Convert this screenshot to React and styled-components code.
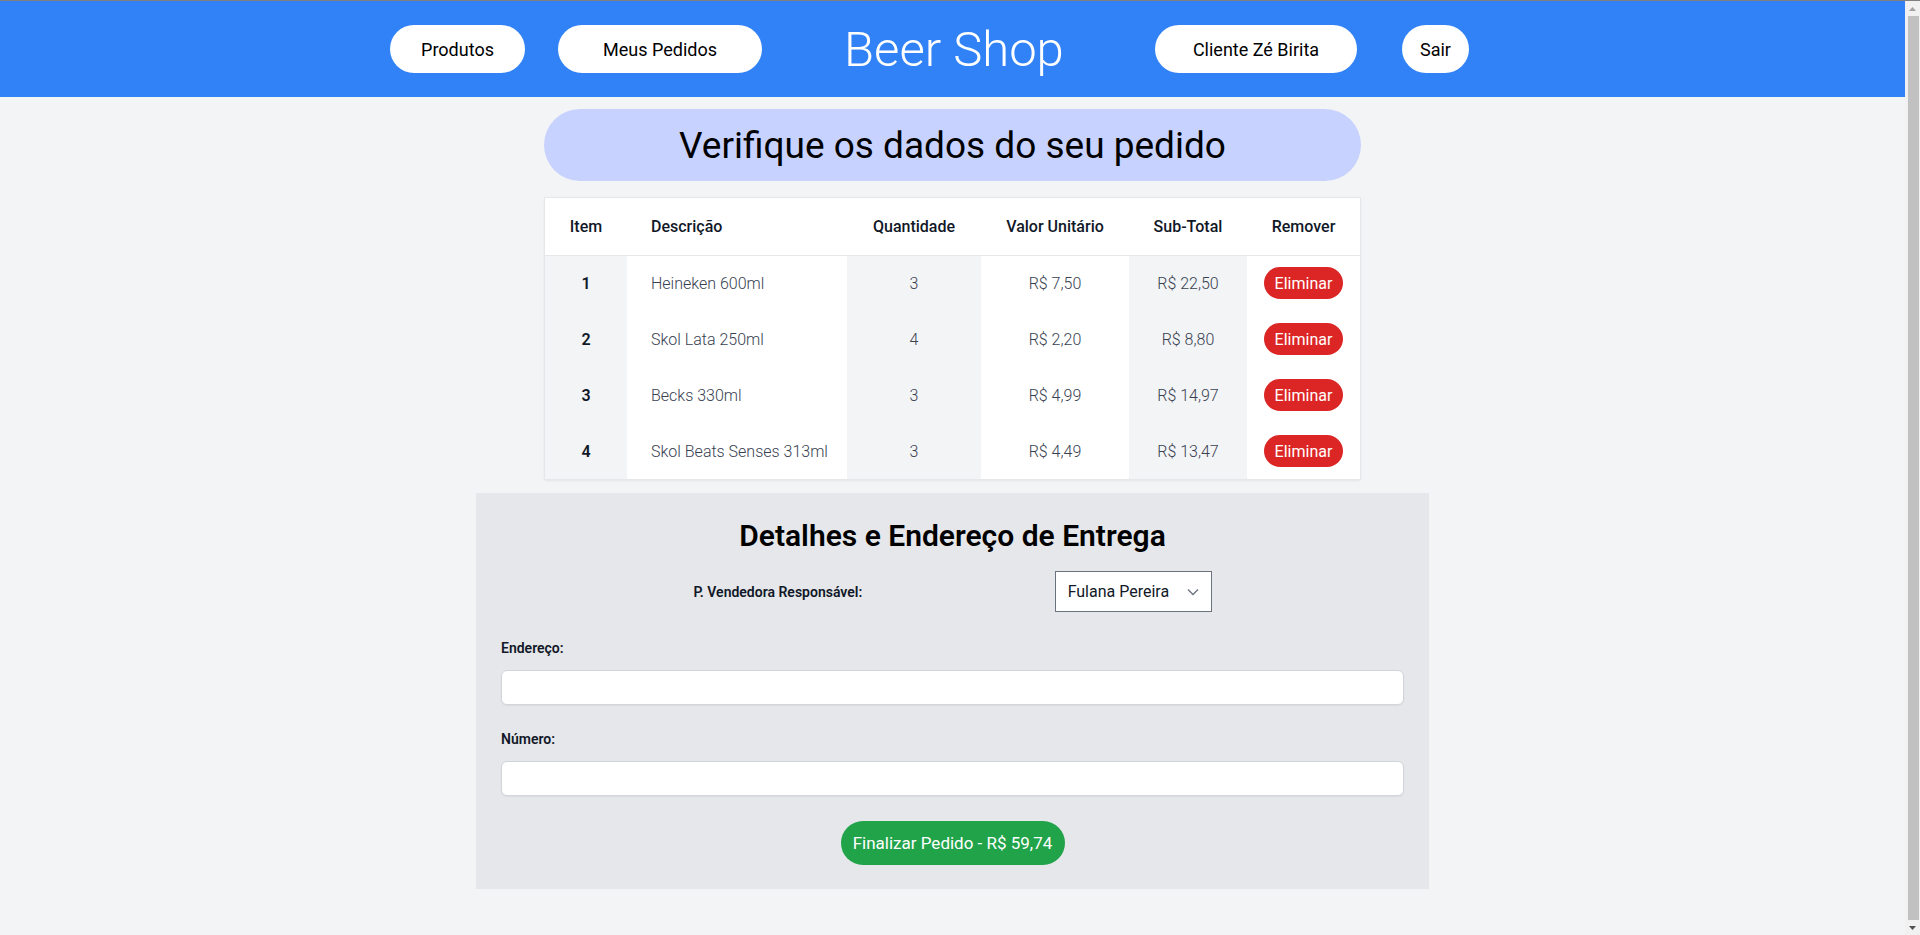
import React from 'react';
import styled, { createGlobalStyle } from 'styled-components';

const GlobalStyle = createGlobalStyle`
  * { box-sizing: border-box; }
  body {
    margin: 0;
    border-top: 1px solid #808080;
    background-color: #f3f4f6;
    font-family: Roboto, "Open Sans", sans-serif;
    color: #111827;
  }
`;

const Page = styled.div`
  min-height: 949px;
  margin-right: 15px;
  display: flex;
  flex-direction: column;
`;

// the classic browser scrollbar seen at the right edge of the screenshot
const ScrollTrack = styled.div`
  position: fixed;
  top: 1px;
  right: 0;
  bottom: 0;
  width: 15px;
  background-color: #f1f1f1;
  display: flex;
  flex-direction: column;
  align-items: center;
`;

const ScrollArrow = styled.div`
  height: 15px;
  display: flex;
  align-items: center;
  justify-content: center;
`;

const ScrollThumb = styled.div`
  flex: 1;
  width: 11px;
  margin: 0 0 0 1px;
  background-color: #c1c1c1;
`;

const Header = styled.header`
  height: 96px;
  background-color: #3182f6;
  display: flex;
  align-items: center;
  justify-content: center;
  padding-right: 46px;
`;

const NavButton = styled.button`
  width: ${props => props.$w}px;
  height: 48px;
  margin-left: ${props => props.$ml || 0}px;
  border: none;
  border-radius: 24px;
  background-color: #fff;
  color: #000;
  font-family: inherit;
  font-size: 18px;
  cursor: pointer;
`;

const Logo = styled.h1`
  width: 217px;
  margin: 0 0 0 82px;
  text-align: center;
  color: #fff;
  font-size: 49px;
  font-weight: 300;
  line-height: 1;
  white-space: nowrap;
`;

const Main = styled.main`
  display: flex;
  flex-direction: column;
  align-items: center;
`;

const TitleBox = styled.h2`
  width: 817px;
  height: 72px;
  margin: 12px 0 0;
  border-radius: 36px;
  background-color: #c7d2fe;
  display: flex;
  align-items: center;
  justify-content: center;
  font-size: 37px;
  font-weight: 400;
  color: #000;
`;

const Table = styled.table`
  width: 815px;
  margin-top: 17px;
  border-collapse: collapse;
  background-color: #fff;
  box-shadow: 0 0 0 1px #e5e7eb, 0 1px 3px rgba(0, 0, 0, 0.12);
  table-layout: fixed;
`;

const Th = styled.th`
  width: ${props => props.$w}px;
  height: 57px;
  padding: 0;
  font-size: 16px;
  font-weight: 500;
  color: #111827;
  text-align: ${props => (props.$left ? 'left' : 'center')};
  padding-left: ${props => (props.$left ? 24 : 0)}px;
  border-bottom: 1px solid #e5e7eb;
`;

const Td = styled.td`
  height: 56px;
  padding: 0;
  font-size: 16px;
  font-weight: ${props => (props.$bold ? 600 : 300)};
  color: ${props => (props.$bold ? '#111827' : '#374151')};
  text-align: ${props => (props.$left ? 'left' : 'center')};
  padding-left: ${props => (props.$left ? 24 : 0)}px;
  background-color: ${props => (props.$shaded ? '#f3f4f6' : '#fff')};
`;

const RemoveButton = styled.button`
  width: 79px;
  height: 32px;
  border: none;
  border-radius: 16px;
  background-color: #dc2626;
  color: #fff;
  font-family: inherit;
  font-size: 16px;
  cursor: pointer;
`;

const Details = styled.section`
  width: 953px;
  margin-top: 14px;
  padding: 25px 25px 24px;
  background-color: #e5e7eb;
  display: flex;
  flex-direction: column;
`;

const DetailsTitle = styled.h3`
  margin: 0;
  text-align: center;
  font-size: 30px;
  font-weight: 600;
  line-height: 36px;
  color: #000;
`;

const SellerRow = styled.div`
  margin-top: 17px;
  display: flex;
  align-items: center;
  justify-content: space-evenly;
`;

const Label = styled.label`
  font-size: 14px;
  font-weight: 600;
  color: #111827;
  margin-top: ${props => props.$mt || 0}px;
`;

const SelectBox = styled.div`
  width: 157px;
  height: 41px;
  padding: 0 12px;
  border: 1px solid #6b7280;
  background-color: #fff;
  display: flex;
  align-items: center;
  justify-content: space-between;
  font-size: 16px;
  color: #111827;
`;

const TextInput = styled.input`
  width: 100%;
  height: 35px;
  margin-top: 14px;
  border: 1px solid #d1d5db;
  border-radius: 6px;
  background-color: #fff;
  box-shadow: 0 1px 2px rgba(0, 0, 0, 0.05);
  font-family: inherit;
  font-size: 16px;
`;

const SubmitButton = styled.button`
  align-self: center;
  width: 224px;
  height: 44px;
  margin-top: 25px;
  border: none;
  border-radius: 22px;
  background-color: #21a34a;
  color: #fff;
  font-family: inherit;
  font-size: 17px;
  cursor: pointer;
`;

const columns = [
  { label: 'Item', w: 82 },
  { label: 'Descrição', w: 220, left: true },
  { label: 'Quantidade', w: 134 },
  { label: 'Valor Unitário', w: 148 },
  { label: 'Sub-Total', w: 118 },
  { label: 'Remover', w: 113 },
];

const items = [
  { id: 1, name: 'Heineken 600ml', qty: 3, price: 'R$ 7,50', total: 'R$ 22,50' },
  { id: 2, name: 'Skol Lata 250ml', qty: 4, price: 'R$ 2,20', total: 'R$ 8,80' },
  { id: 3, name: 'Becks 330ml', qty: 3, price: 'R$ 4,99', total: 'R$ 14,97' },
  { id: 4, name: 'Skol Beats Senses 313ml', qty: 3, price: 'R$ 4,49', total: 'R$ 13,47' },
];

const Chevron = () => (
  <svg width="12" height="8" viewBox="0 0 12 8" fill="none">
    <path d="M1 1.5l5 5 5-5" stroke="#6b7280" strokeWidth="1.3" />
  </svg>
);

const Triangle = ({ up, color }) => (
  <svg width="7" height="4" viewBox="0 0 7 4">
    <path d={up ? 'M0 4L3.5 0L7 4Z' : 'M0 0L3.5 4L7 0Z'} fill={color} />
  </svg>
);

export default function App() {
  return (
    <Page>
      <GlobalStyle />
      <Header>
        <NavButton $w={135}>Produtos</NavButton>
        <NavButton $w={204} $ml={33}>Meus Pedidos</NavButton>
        <Logo>Beer Shop</Logo>
        <NavButton $w={202} $ml={94}>Cliente Zé Birita</NavButton>
        <NavButton $w={67} $ml={45}>Sair</NavButton>
      </Header>
      <Main>
        <TitleBox>Verifique os dados do seu pedido</TitleBox>
        <Table>
          <thead>
            <tr>
              {columns.map(col => (
                <Th key={col.label} $w={col.w} $left={col.left}>{col.label}</Th>
              ))}
            </tr>
          </thead>
          <tbody>
            {items.map(item => (
              <tr key={item.id}>
                <Td $bold $shaded>{item.id}</Td>
                <Td $left>{item.name}</Td>
                <Td $shaded>{item.qty}</Td>
                <Td>{item.price}</Td>
                <Td $shaded>{item.total}</Td>
                <Td><RemoveButton>Eliminar</RemoveButton></Td>
              </tr>
            ))}
          </tbody>
        </Table>
        <Details>
          <DetailsTitle>Detalhes e Endereço de Entrega</DetailsTitle>
          <SellerRow>
            <Label>P. Vendedora Responsável:</Label>
            <SelectBox>
              <span>Fulana Pereira</span>
              <Chevron />
            </SelectBox>
          </SellerRow>
          <Label $mt={28}>Endereço:</Label>
          <TextInput />
          <Label $mt={26}>Número:</Label>
          <TextInput />
          <SubmitButton>Finalizar Pedido - R$ 59,74</SubmitButton>
        </Details>
      </Main>
      <ScrollTrack>
        <ScrollArrow><Triangle up color="#a3a3a3" /></ScrollArrow>
        <ScrollThumb />
        <ScrollArrow><Triangle color="#505050" /></ScrollArrow>
      </ScrollTrack>
    </Page>
  );
}
